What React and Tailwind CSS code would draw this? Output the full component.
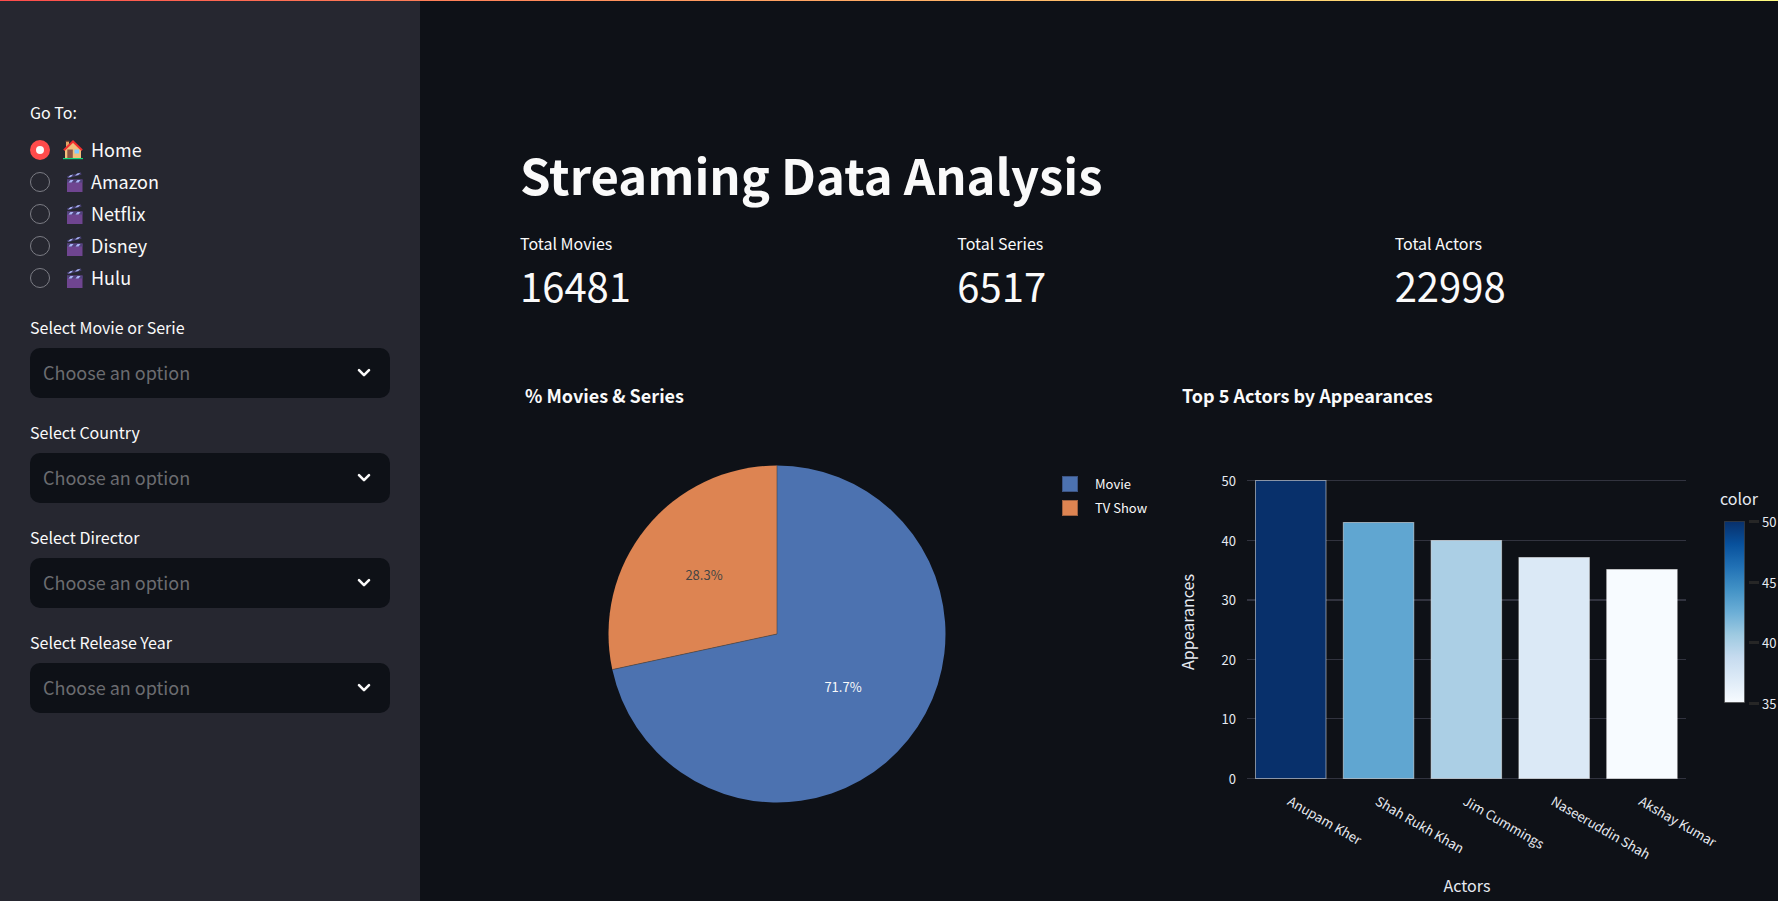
import { useState } from "react";

const PAGES = ["Home", "Amazon", "Netflix", "Disney", "Hulu"];

const FILTERS = [
  { id: "title", label: "Select Movie or Serie" },
  { id: "country", label: "Select Country" },
  { id: "director", label: "Select Director" },
  { id: "year", label: "Select Release Year" },
];

const METRICS = [
  { label: "Total Movies", value: "16481" },
  { label: "Total Series", value: "6517" },
  { label: "Total Actors", value: "22998" },
];

const ACTORS = [
  { name: "Anupam Kher", count: 50, color: "#08306b" },
  { name: "Shah Rukh Khan", count: 43, color: "#60a6d1" },
  { name: "Jim Cummings", count: 40, color: "#abcfe5" },
  { name: "Naseeruddin Shah", count: 37, color: "#dbe9f6" },
  { name: "Akshay Kumar", count: 35, color: "#f7fbff" },
];

const BLUES = [
  "#08306b",
  "#08519c",
  "#2171b5",
  "#4292c6",
  "#6baed6",
  "#9ecae1",
  "#c6dbef",
  "#deebf7",
  "#f7fbff",
];

function HouseIcon() {
  return (
    <svg viewBox="0 0 20 20" className="h-5 w-5 shrink-0" aria-hidden="true">
      <path d="M3 1h3v7H3z" fill="#e0a566" />
      <path d="M2.600 .7h3.800v1.200H2.600z" fill="#7d4533" />
      <path d="M2 9.500 10 2l8 7.500V18H2z" fill="#f2bf7c" />
      <path d="M.9 10.300 10 1.500l9.100 8.800" fill="none" stroke="#f2302f" strokeWidth="2" />
      <path d="M4.300 9.500h5.500V18H4.300z" fill="#8d5544" />
      <path d="M11.500 9.500h4.500v4h-4.500z" fill="#83cbff" />
      <path d="M0 18h20v1.200H0z" fill="#12d67a" />
    </svg>
  );
}

function ClapperIcon() {
  return (
    <svg viewBox="0 0 20 20" className="h-5 w-5 shrink-0" aria-hidden="true">
      <path d="M4 4.200 18 .4l.5 2.300L4.500 6.200z" fill="#433b6b" />
      <path d="m5 5.600 2.200-2.300 3-.8-2.200 2.400zM12 3.800l2.200-2.300 3.200-.8-2.100 2.300z" fill="#a9b4f5" />
      <path d="M4 7.500h15.500V20H4z" fill="#6f4590" />
      <path d="M4 7.500h15.500v3H4z" fill="#51427c" />
      <path d="m5.500 10.400 2-2.400h3l-2 2.400zM12.500 10.400l2-2.400h3l-2 2.400z" fill="#a9b4f5" />
    </svg>
  );
}

function Sidebar() {
  const [page, setPage] = useState("Home");
  return (
    <aside className="w-[420px] shrink-0 bg-[#262730] px-[30px] pt-[100px]">
      <fieldset>
        <legend className="text-base leading-6">Go To:</legend>
        <div className="mt-[10px] flex flex-col">
          {PAGES.map((name) => (
            <label key={name} className="flex h-8 items-center text-lg">
              <input
                type="radio"
                name="page"
                checked={page === name}
                onChange={() => setPage(name)}
                className="h-5 w-5 shrink-0 appearance-none rounded-full border border-[#7b7c84] checked:border-[6px] checked:border-[#ff4b4b] checked:bg-[#fafafa]"
              />
              <span className="ml-[13px] flex items-center gap-2">
                {name === "Home" ? <HouseIcon /> : <ClapperIcon />}
                <span className="pb-0.5 leading-[30px]">{name}</span>
              </span>
            </label>
          ))}
        </div>
      </fieldset>
      <div className="mt-4 flex flex-col gap-[17px]">
        {FILTERS.map(({ id, label }) => (
          <div key={id}>
            <label htmlFor={id} className="block h-[38px] pt-1 text-base leading-[26px]">
              {label}
            </label>
            <div className="relative">
              <select
                id={id}
                defaultValue=""
                className="block h-[50px] w-full appearance-none rounded-[10px] bg-[#0e1117] pb-0.5 pl-[13px] text-lg text-[#6b6c70]"
              >
                <option value="">Choose an option</option>
              </select>
              <svg
                viewBox="0 0 14 10"
                className="pointer-events-none absolute top-5 right-[19px] h-[10px] w-[14px]"
                fill="none"
                stroke="#fafafa"
                strokeWidth="2.600"
                strokeLinecap="round"
                strokeLinejoin="round"
                aria-hidden="true"
              >
                <path d="m2 2.200 5 5 5-5" />
              </svg>
            </div>
          </div>
        ))}
      </div>
    </aside>
  );
}

function PieChart() {
  return (
    <svg viewBox="0 0 636 560" className="block w-full" fontSize="13" fill="#fafafa">
      <text x="5" y="33" fontSize="18" fontWeight="700">% Movies &amp; Series</text>
      <path
        d="M257 264V95.500A168.500 168.500 0 1 1 92.300 299.600Z"
        fill="#4c72b0"
      />
      <path d="M257 264 92.300 299.600A168.500 168.500 0 0 1 257 95.500Z" fill="#dd8452" />
      <path d="M257 95.500V264L92.300 299.600" fill="none" stroke="#444" strokeOpacity=".6" strokeWidth="1" />
      <text x="184" y="210" textAnchor="middle" fill="#444">28.3%</text>
      <text x="323" y="322" textAnchor="middle">71.7%</text>
      <rect x="542.500" y="106.500" width="15" height="15" fill="#4c72b0" stroke="#3c5483" />
      <rect x="542.500" y="130.500" width="15" height="15" fill="#dd8452" stroke="#9d6040" />
      <text x="575" y="119">Movie</text>
      <text x="575" y="143">TV Show</text>
    </svg>
  );
}

function BarChart() {
  const baseY = 408;
  const unit = 5.960;
  return (
    <svg viewBox="0 0 636 560" className="block w-full" fontSize="13" fill="#e6eaf1">
      <defs>
        <linearGradient id="blues" x1="0" y1="0" x2="0" y2="1">
          {BLUES.map((color, i) => (
            <stop key={color} offset={i / (BLUES.length - 1)} stopColor={color} />
          ))}
        </linearGradient>
      </defs>
      <text x="6" y="33" fontSize="18" fontWeight="700" fill="#fafafa">Top 5 Actors by Appearances</text>
      {[0, 10, 20, 30, 40, 50].map((tick) => {
        const y = Math.round(baseY - tick * unit);
        return (
          <g key={tick}>
            <rect x="71" y={y} width="439" height={tick === 30 ? 2 : 1} fill="#31333f" />
            <text x="60" y={y + 6} textAnchor="end">{tick}</text>
          </g>
        );
      })}
      {ACTORS.map(({ name, count, color }, i) => {
        const x = 79.500 + i * 87.800;
        const y = Math.round(baseY - count * unit) + 0.500;
        return (
          <g key={name}>
            <rect x={x} y={y} width="70.500" height={baseY + 0.500 - y} fill={color} stroke="#fafafa" strokeOpacity=".5" />
            <text transform={`translate(${x + 31} ${baseY + 26}) rotate(30)`}>{name}</text>
          </g>
        );
      })}
      <text transform="translate(18 252) rotate(-90)" textAnchor="middle" fontSize="16">Appearances</text>
      <text x="291" y="522" textAnchor="middle" fontSize="16">Actors</text>
      <text x="544" y="135" fontSize="16">color</text>
      <rect x="548.500" y="151.500" width="20" height="181" fill="url(#blues)" stroke="#444" strokeOpacity=".6" />
      {[50, 45, 40, 35].map((tick) => {
        const y = Math.round(152 + (50 - tick) * 12.100);
        return (
          <g key={tick}>
            <rect x="573" y={y - 2} width="10" height="3" fill="#262626" />
            <text x="586" y={y + 5}>{tick}</text>
          </g>
        );
      })}
    </svg>
  );
}

export default function App() {
  return (
    <div className="relative flex min-h-screen overflow-hidden bg-[#0e1117] font-['Noto_Sans_CJK_SC',sans-serif] text-[#fafafa]">
      <div className="absolute inset-x-0 top-0 h-px bg-linear-to-r from-[#ff4b4b] to-[#fffd80]" />
      <Sidebar />
      <main className="max-h-screen min-w-[1492px] flex-1 px-[100px] pt-[141px]">
        <h1 className="text-[49px] leading-[66px] font-bold">Streaming Data Analysis</h1>
        <dl className="mt-[22px] grid grid-cols-3 gap-5">
          {METRICS.map(({ label, value }) => (
            <div key={label}>
              <dt className="text-base leading-7">{label}</dt>
              <dd className="text-[40px] leading-[56px]">{value}</dd>
            </div>
          ))}
        </dl>
        <div className="mt-[57px] grid grid-cols-2 gap-5">
          <PieChart />
          <BarChart />
        </div>
      </main>
    </div>
  );
}
